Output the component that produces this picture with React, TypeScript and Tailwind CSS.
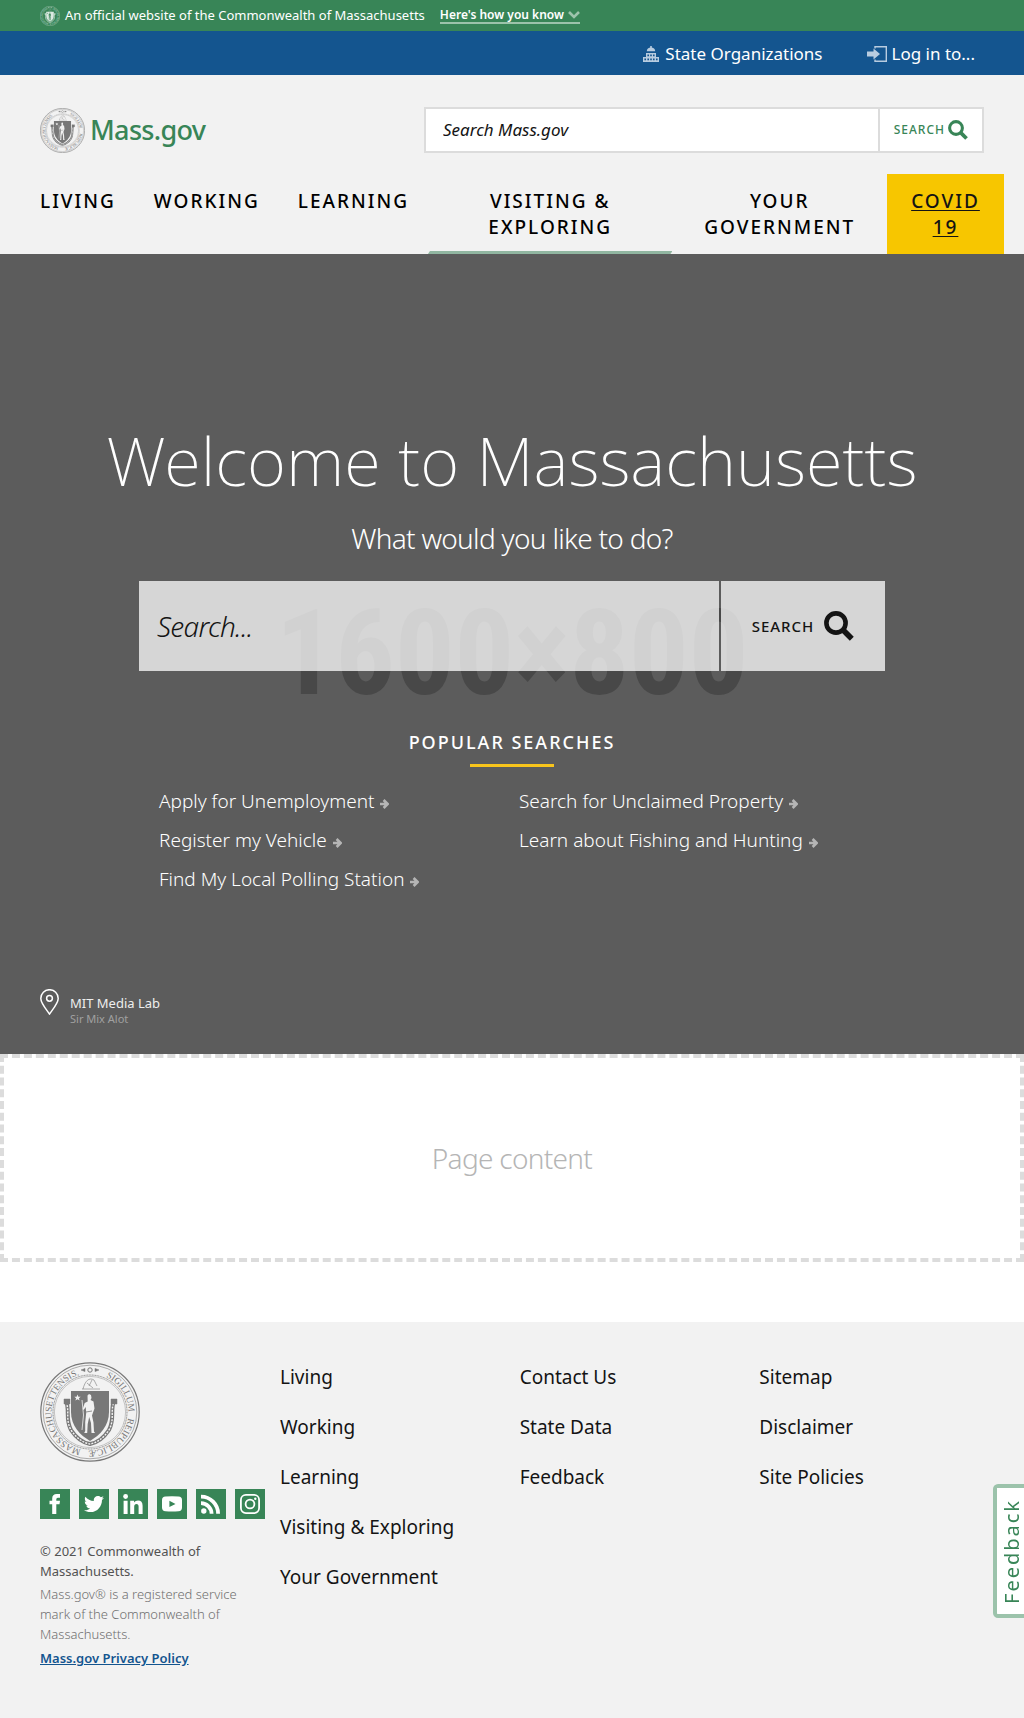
import React, { useId } from "react";
import { FaTwitter } from "react-icons/fa";

function Seal({ className, crest = "#f2f2f2" }: { className: string; crest?: string }) {
  const id = useId();
  return (
    <svg viewBox="0 0 100 100" className={className} fill="none" stroke="currentColor" role="img" aria-label="Massachusetts State Seal">
      <defs>
        <path id={id} d="M50 50 m0 38.5 a38.5 38.5 0 1 1 0.01 0" />
      </defs>
      <circle cx="50" cy="50" r="49.2" strokeWidth="1.2" />
      <circle cx="50" cy="50" r="46.8" strokeWidth="0.6" />
      <circle cx="50" cy="50" r="37" strokeWidth="0.9" strokeDasharray="1 0.6" />
      <circle cx="50" cy="50" r="35.6" strokeWidth="0.4" />
      <g fill="currentColor" stroke="none" fontFamily="'Liberation Serif', serif" fontSize="9.2">
        <text>
          <textPath href={"#" + id} startOffset="9">MASSACHUSETTENSIS.</textPath>
        </text>
        <text>
          <textPath href={"#" + id} startOffset="137">SIGILLUM</textPath>
        </text>
        <text>
          <textPath href={"#" + id} startOffset="187">REIPUBLICÆ</textPath>
        </text>
      </g>
      <path d="M41 8 l4 -1.6 v3.2z M59 8 l-4 -1.6 v3.2z" fill="currentColor" strokeWidth="0.5" />
      <circle cx="50" cy="8" r="2.2" strokeWidth="1" />
      <path d="M43 27 C45 19 49 15 54 18 L57 24 M42 27 H60 M47 21 l6 5 M52 18 l-3 6" strokeWidth="0.9" opacity="0.65" />
      <path d="M31 29 H69 V50 C69 64 60 73 50 79 C40 73 31 64 31 50 Z" fill="currentColor" stroke="none" />
      <path d="M26 38 C30 49 25 57 31 68 C37 77 44 81 50 82 C56 81 63 77 69 68 C75 57 70 49 74 38" strokeWidth="4" />
      <path d="M26 40 C30 49 25 57 31 68 C37 77 44 81 50 82 C56 81 63 77 69 68 C75 57 70 49 74 40" stroke={crest} strokeWidth="1.4" strokeDasharray="2 1.2" />
      <path d="M24 37 h6 v5 h-6z M71 37 h6 v5 h-6z" fill="currentColor" strokeWidth="0.5" />
      <path d="M37.5 32.5 l0.9 2.2 2.3 0 -1.8 1.5 0.7 2.3 -2.1 -1.3 -2.1 1.3 0.7 -2.3 -1.800 -1.5 2.3 0z" fill={crest} stroke="none" />
      <path d="M47.5 33.5 l1.500 -1.500 2 1 .5 3 -1 2 3 1.500 1 7 -1.500 4 -1 3 1.500 7 .5 9 1 1.500 h-3.500 l-.5 -10 -1.800 -6 -1.500 7 -.5 9 h-3 l1 -2 v-9 l1 -9 -.5 -6 -2 3 -1 -1 2 -6 3 -1.500z" fill={crest} stroke="none" />
      <path d="M42 38 Q45 53 42 68" stroke={crest} strokeWidth="0.8" />
      <path d="M46 50 l6 -1" strokeWidth="0.8" />
    </svg>
  );
}

function SearchIcon({ className }: { className: string }) {
  return (
    <svg viewBox="0 0 30 30" className={className} fill="none" stroke="currentColor" strokeWidth="4.6" aria-hidden="true">
      <circle cx="12" cy="12" r="9.6" />
      <path d="M18.6 18.6 L27.8 27.8" strokeWidth="5.6" />
    </svg>
  );
}

function CapitolIcon() {
  return (
    <svg viewBox="0 0 16 16" className="size-4 text-[#b8cce0]" fill="currentColor" aria-hidden="true">
      <path d="M7.2 0h1.6v1.4a4 4 0 0 1 3.4 3.8H3.8a4 4 0 0 1 3.4-3.8z" />
      <path fillRule="evenodd" d="M3 7h10v4h3v5H0v-5h3z M4.4 8.6v1.6H6V8.6z M7.2 8.6v1.6h1.6V8.6z M10 8.6v1.6h1.6V8.6z M1.4 12.6v1.6H3v-1.6z M4.4 12.6v1.6H6v-1.6z M7.2 12.6v1.6h1.6v-1.6z M10 12.6v1.6h1.6v-1.6z M13 12.6v1.6h1.6v-1.6z" />
    </svg>
  );
}

function LoginIcon() {
  return (
    <svg viewBox="0 0 20 16" className="h-4 w-5 text-[#b8cce0]" aria-hidden="true">
      <path d="M8 2.500V.7h11.3v14.6H8V13.500" fill="none" stroke="currentColor" strokeWidth="1.4" />
      <path d="M0 5.5h6.5V2.5L13 8l-6.5 5.5v-3H0z" fill="currentColor" />
    </svg>
  );
}

function ArrowIcon() {
  return (
    <svg viewBox="0 0 9 10" className="mt-1 h-2.5 w-[9px] text-[#b5b5b5]" fill="none" stroke="currentColor" strokeWidth="2.6" aria-hidden="true">
      <path d="M0 5h7M3.6 1l4 4-4 4" />
    </svg>
  );
}

function FacebookIcon() {
  return (
    <svg viewBox="0 0 20 20" className="size-5" fill="currentColor" aria-hidden="true">
      <path d="M7.200 20V10.300H4.500V6.800H7.200V4.600Q7.200 0 11.800 0H15V3.700H12.800Q11.300 3.700 11.300 5.200V6.800H15L14.500 10.300H11.300V20z" />
    </svg>
  );
}

function LinkedinIcon() {
  return (
    <svg viewBox="0 0 20 20" className="size-5" fill="currentColor" aria-hidden="true">
      <circle cx="2.600" cy="2.500" r="2.400" />
      <path d="M.6 6.700h4V20h-4zM7.200 6.700h3.900v1.800Q12.400 6.400 15 6.400Q19.600 6.400 19.600 11.800V20h-4V12.700Q15.600 9.900 13.500 9.900Q11.200 9.900 11.200 12.700V20h-4z" />
    </svg>
  );
}

function YoutubeIcon() {
  return (
    <svg viewBox="0 0 20 20" className="size-5" aria-hidden="true">
      <path fillRule="evenodd" fill="currentColor" d="M3.5 2.6 Q10 1.9 16.5 2.6 Q20 3 20 6 V13.500 Q20 17 16.500 17.200 Q10 17.800 3.500 17.200 Q0 17 0 13.500 V6 Q0 3 3.500 2.600Z M7.400 6.800V13L13.500 9.900Z" />
    </svg>
  );
}

function RssIcon() {
  return (
    <svg viewBox="0 0 20 20" className="size-5" fill="none" stroke="currentColor" strokeWidth="3.800" aria-hidden="true">
      <circle cx="2.800" cy="17" r="2.700" fill="currentColor" stroke="none" />
      <path d="M0 9.200A10.600 10.600 0 0 1 10.600 19.800M0 2.700A17.100 17.100 0 0 1 17.100 19.800" />
    </svg>
  );
}

function InstagramIcon() {
  return (
    <svg viewBox="0 0 20 20" className="size-5" fill="none" stroke="currentColor" strokeWidth="1.8" aria-hidden="true">
      <rect x="0.900" y="0.900" width="18.200" height="18.200" rx="5" />
      <circle cx="10" cy="10" r="4.400" />
      <circle cx="15.300" cy="4.700" r="1.200" fill="currentColor" stroke="none" />
    </svg>
  );
}

const popular = [
  ["Apply for Unemployment", "Register my Vehicle", "Find My Local Polling Station"],
  ["Search for Unclaimed Property", "Learn about Fishing and Hunting"],
];

const footerLinks = [
  ["Living", "Working", "Learning", "Visiting & Exploring", "Your Government"],
  ["Contact Us", "State Data", "Feedback"],
  ["Sitemap", "Disclaimer", "Site Policies"],
];

const social = [
  { name: "Facebook", icon: <FacebookIcon /> },
  { name: "Twitter", icon: <FaTwitter className="size-5" /> },
  { name: "LinkedIn", icon: <LinkedinIcon /> },
  { name: "YouTube", icon: <YoutubeIcon /> },
  { name: "RSS", icon: <RssIcon /> },
  { name: "Instagram", icon: <InstagramIcon /> },
];

export default function App() {
  return (
    <div className="min-h-screen bg-[#f2f2f2] font-['Noto_Sans',sans-serif] text-[#141414]">
      <div className="flex h-[31px] items-center bg-[#388557] px-10 text-[13px] text-white">
        <Seal className="mr-[5px] size-5 text-[#dbe9e1]" crest="#388557" />
        <span>An official website of the Commonwealth of Massachusetts</span>
        <button className="ml-[15px] flex h-[17px] items-center gap-1 border-b-2 border-[#9cc3ab] text-xs font-semibold">
          Here's how you know
          <svg viewBox="0 0 12 8" className="h-2 w-3 text-[#9cc3ab]" fill="none" stroke="currentColor" strokeWidth="2.6" aria-hidden="true">
            <path d="M1 1l5 5 5-5" />
          </svg>
        </button>
      </div>

      <div className="flex h-11 items-center justify-end gap-11 bg-[#14558f] pt-0.5 pr-[49px] text-[17px] text-white">
        <button className="flex items-center gap-1.5"><CapitolIcon />State Organizations</button>
        <button className="flex items-center gap-[5px]"><LoginIcon />Log in to...</button>
      </div>

      <header>
        <div className="flex items-center justify-between px-10 pt-8">
          <a href="#" className="flex items-center gap-[5px] text-[27px] font-medium tracking-tight text-[#388557]">
            <Seal className="size-[45px] text-[#787878]" />
            Mass.gov
          </a>
          <form className="flex h-[46px] w-[560px] border-2 border-[#dcdcdc] bg-white" onSubmit={(e) => e.preventDefault()}>
            <input type="text" aria-label="Search Mass.gov" placeholder="Search Mass.gov" className="min-w-0 flex-1 px-[17px] text-[17px] italic outline-none placeholder:text-[#141414]" />
            <button className="flex items-center gap-[3px] border-l-2 border-[#dcdcdc] px-3.5 text-xs font-medium tracking-[1px] text-[#388557]">
              SEARCH<SearchIcon className="size-5" />
            </button>
          </form>
        </div>
        <nav className="mt-[21px] flex h-20 pr-5 pl-[21px] text-center text-[19px] leading-[26px] font-medium tracking-[2px] text-black">
          <a href="#" className="shrink-0 px-[19px] pt-3.5">LIVING</a>
          <a href="#" className="shrink-0 px-[19px] pt-3.5">WORKING</a>
          <a href="#" className="shrink-0 px-[19px] pt-3.5">LEARNING</a>
          <a href="#" className="flex flex-[245] flex-col justify-between pt-3.5">
            <span className="px-5">VISITING & EXPLORING</span>
            <span className="h-[3px] bg-[#91b6a1] [clip-path:polygon(2px_0,100%_0,calc(100%-2px)_100%,0_100%)]" />
          </a>
          <a href="#" className="flex-[215] pt-3.5">
            <span className="block px-5">YOUR GOVERNMENT</span>
          </a>
          <a href="#" className="w-[117px] bg-[#f7c600] px-5 pt-3.5 text-[#141414] underline underline-offset-2">COVID 19</a>
        </nav>
      </header>

      <main className="bg-white pb-15">
        <section className="relative flex min-h-[800px] flex-col bg-[#5c5c5c] text-white">
          <div aria-hidden="true" className="absolute inset-0 flex items-center justify-center font-['Roboto_Condensed','Open_Sans_Condensed','DejaVu_Sans_Condensed','Liberation_Sans',sans-serif] text-[118px] leading-none font-bold text-[#484848]">
            1600×800
          </div>
          <div className="relative flex flex-1 flex-col px-10 pt-[156px]">
            <h1 className="text-center text-[67px] leading-[100px] font-extralight">Welcome to Massachusetts</h1>
            <p className="mt-[5px] text-center text-[28px] leading-[46px] font-light tracking-tight">What would you like to do?</p>
            <form className="mx-auto mt-5 flex h-[90px] w-full max-w-[746px] gap-0.5 text-[#141414]" onSubmit={(e) => e.preventDefault()}>
              <input type="text" aria-label="Search" placeholder="Search..." className="min-w-0 flex-1 bg-white/75 px-[18px] text-[28px] font-light tracking-tight italic outline-none placeholder:text-[#141414]" />
              <button className="flex w-[164px] items-center justify-center gap-2.5 bg-white/75 text-[15px] font-medium tracking-[1px]">
                SEARCH<SearchIcon className="size-[30px]" />
              </button>
            </form>
            <div className="mx-auto w-full max-w-[706px]">
              <h2 className="mt-[58px] text-center text-lg leading-[26px] font-medium tracking-[2px]">POPULAR SEARCHES</h2>
              <div className="mx-auto mt-[9px] h-[3px] w-[84px] bg-[#f8c51c]" />
              <div className="mt-[15px] flex">
                {popular.map((col, i) => (
                  <ul key={i} className="flex-1 odd:grow-[1.04]">
                    {col.map((t) => (
                      <li key={t} className="flex h-[39px] items-center">
                        <a href="#" className="flex items-center gap-1.5 text-[19px] font-light">{t}<ArrowIcon /></a>
                      </li>
                    ))}
                  </ul>
                ))}
              </div>
            </div>
            <div className="mt-auto mb-[27px] flex gap-[11px]">
              <svg viewBox="0 0 19 26" className="h-[26px] w-[19px]" fill="none" stroke="currentColor" strokeWidth="1.5" aria-hidden="true">
                <path d="M9.500 25C6 20 .8 14 .8 9.400a8.700 8.700 0 0 1 17.400 0C18.200 14 13 20 9.500 25z" />
                <circle cx="9.500" cy="9.300" r="2.900" />
              </svg>
              <div className="pt-1.5">
                <p className="text-[13px] leading-4 font-normal text-[#eeeeee]">MIT Media Lab</p>
                <p className="text-[11px] leading-4 text-[#a0a0a0]">Sir Mix Alot</p>
              </div>
            </div>
          </div>
        </section>
        <div className="flex h-52 items-center justify-center border-4 border-dashed border-[#dcdcdc] text-[28px] font-light tracking-tight text-[#b5b5b5]">
          Page content
        </div>
      </main>

      <footer className="flex px-10 pt-10 pb-12">
        <div className="w-[225px] shrink-0">
          <Seal className="size-[100px] text-[#787878]" />
          <div className="mt-[27px] flex gap-[9px]">
            {social.map((s) => (
              <a key={s.name} href="#" aria-label={s.name} className="flex size-[30px] items-center justify-center bg-[#388557] text-white">
                {s.icon}
              </a>
            ))}
          </div>
          <div className="mt-[22px] text-[13px] leading-5 text-[#535353]">
            <p>© 2021 Commonwealth of Massachusetts.</p>
            <p className="mt-[3px] font-light text-[#707070]">Mass.gov® is a registered service mark of the Commonwealth of Massachusetts.</p>
            <a href="#" className="mt-1 block font-semibold text-[#14558f] underline">Mass.gov Privacy Policy</a>
          </div>
        </div>
        <nav className="-mr-[15px] ml-[15px] grid flex-1 grid-cols-3 text-[19px] leading-[26px]">
          {footerLinks.map((col, i) => (
            <ul key={i} className="flex flex-col gap-6 pt-0.5">
              {col.map((t) => (
                <li key={t}><a href="#">{t}</a></li>
              ))}
            </ul>
          ))}
        </nav>
      </footer>

      <button className="fixed right-0 bottom-[100px] flex h-[134px] w-[31px] rotate-180 items-center justify-center rounded-r-[5px] border-4 border-l-0 border-[#9cc3ab] bg-white pr-1 text-xl leading-[26px] tracking-[2px] text-[#388557] [writing-mode:vertical-rl]">
        Feedback
      </button>
    </div>
  );
}
